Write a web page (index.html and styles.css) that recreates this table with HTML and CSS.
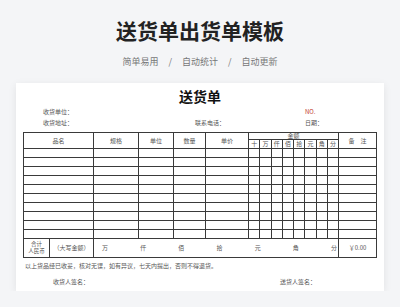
FILE: index.html
```html
<!DOCTYPE html>
<html lang="zh-CN">
<head>
<meta charset="utf-8">
<title>送货单出货单模板</title>
<link rel="stylesheet" href="styles.css">
</head>
<body>
<header class="hero">
  <h1 class="hero-title">送货单出货单模板</h1>
  <p class="hero-sub"><span>简单易用</span><span class="sep">/</span><span>自动统计</span><span class="sep">/</span><span>自动更新</span></p>
</header>
<main class="sheet">
  <h2 class="sheet-title">送货单</h2>
  <div class="info">
    <span>收货单位：</span><span></span><span class="no">NO.</span>
    <span>收货地址：</span><span>联系电话：</span><span>日期：</span>
  </div>
  <table class="grid">
    <colgroup>
      <col class="c-a"><col class="c-b"><col class="c-spec"><col class="c-unit"><col class="c-qty"><col class="c-price">
      <col class="c-amt"><col class="c-amt"><col class="c-amt"><col class="c-amt"><col class="c-amt"><col class="c-amt"><col class="c-amt"><col class="c-amt">
      <col class="c-note">
    </colgroup>
    <thead>
      <tr class="head-top">
        <th colspan="2" rowspan="2">品名</th>
        <th rowspan="2">规格</th>
        <th rowspan="2">单位</th>
        <th rowspan="2">数量</th>
        <th rowspan="2">单价</th>
        <th colspan="8">金额</th>
        <th rowspan="2">备　注</th>
      </tr>
      <tr class="head-sub">
        <th>十</th><th>万</th><th>仟</th><th>佰</th><th>拾</th><th>元</th><th>角</th><th>分</th>
      </tr>
    </thead>
    <tbody>
      <tr class="row"><td colspan="2"></td><td></td><td></td><td></td><td></td><td></td><td></td><td></td><td></td><td></td><td></td><td></td><td></td><td></td></tr>
      <tr class="row"><td colspan="2"></td><td></td><td></td><td></td><td></td><td></td><td></td><td></td><td></td><td></td><td></td><td></td><td></td><td></td></tr>
      <tr class="row"><td colspan="2"></td><td></td><td></td><td></td><td></td><td></td><td></td><td></td><td></td><td></td><td></td><td></td><td></td><td></td></tr>
      <tr class="row"><td colspan="2"></td><td></td><td></td><td></td><td></td><td></td><td></td><td></td><td></td><td></td><td></td><td></td><td></td><td></td></tr>
      <tr class="row"><td colspan="2"></td><td></td><td></td><td></td><td></td><td></td><td></td><td></td><td></td><td></td><td></td><td></td><td></td><td></td></tr>
      <tr class="row"><td colspan="2"></td><td></td><td></td><td></td><td></td><td></td><td></td><td></td><td></td><td></td><td></td><td></td><td></td><td></td></tr>
      <tr class="row"><td colspan="2"></td><td></td><td></td><td></td><td></td><td></td><td></td><td></td><td></td><td></td><td></td><td></td><td></td><td></td></tr>
      <tr class="row"><td colspan="2"></td><td></td><td></td><td></td><td></td><td></td><td></td><td></td><td></td><td></td><td></td><td></td><td></td><td></td></tr>
      <tr class="row"><td colspan="2"></td><td></td><td></td><td></td><td></td><td></td><td></td><td></td><td></td><td></td><td></td><td></td><td></td><td></td></tr>
      <tr class="row"><td colspan="2"></td><td></td><td></td><td></td><td></td><td></td><td></td><td></td><td></td><td></td><td></td><td></td><td></td><td></td></tr>
    </tbody>
    <tfoot>
      <tr class="total">
        <td class="sum-label">合计<br>人民币</td>
        <td>（大写金额）</td>
        <td colspan="12"><div class="units"><span>万</span><span>仟</span><span>佰</span><span>拾</span><span>元</span><span>角</span><span>分</span></div></td>
        <td>￥0.00</td>
      </tr>
    </tfoot>
  </table>
  <p class="terms">以上货品经已收妥，核对无误，如有异议，七天内提出，否则不得退货。</p>
  <div class="sign"><span>收货人签名：</span><span>送货人签名：</span></div>
</main>
</body>
</html>
```

FILE: styles.css
```css
* { box-sizing: border-box; }
body {
  margin: 0;
  background: #f4f5f7;
  font-family: "Noto Sans CJK SC", "Noto Sans", sans-serif;
  color: #333;
}
.hero { padding-top: 18px; text-align: center; }
.hero-title {
  margin: 0;
  font-size: 21px;
  line-height: 24px;
  font-weight: 700;
  color: #222;
}
.hero-sub {
  margin: 14px 0 0;
  display: flex;
  justify-content: center;
  gap: 10px;
  font-size: 9px;
  line-height: 12px;
  color: #777;
}
.sheet {
  margin: 15px 16px 0;
  height: 208px;
  background: #fff;
  box-shadow: 0 2px 8px rgba(0, 0, 0, 0.08);
  padding: 5px 7px 0;
}
.sheet-title {
  margin: 0;
  text-align: center;
  font-size: 14px;
  line-height: 16px;
  font-weight: 700;
  color: #111;
}
.info {
  display: grid;
  grid-template-columns: 152px 110px auto;
  row-gap: 3px;
  margin: 4px 0 0 20px;
  font-size: 6px;
  line-height: 8px;
  color: #555;
}
.no { color: #c0392b; }
.grid {
  margin-top: 5px;
  width: 353px;
  table-layout: fixed;
  border-collapse: collapse;
  font-size: 6px;
  line-height: 6px;
  color: #555;
}
.c-a { width: 26px; }
.c-b { width: 44px; }
.c-spec { width: 45px; }
.c-unit { width: 35px; }
.c-qty { width: 32px; }
.c-price { width: 43px; }
.c-amt { width: 11.25px; }
.c-note { width: 38px; }
.grid th, .grid td {
  border: 1px solid #3a3a3a;
  padding: 0;
  font-weight: 400;
  text-align: center;
  vertical-align: middle;
}
.head-top { height: 6px; }
.head-sub { height: 9px; }
.row { height: 9px; }
.total { height: 19px; }
.grid .sum-label { font-size: 5.5px; line-height: 7.5px; }
.units {
  display: flex;
  justify-content: space-between;
  padding: 0 1px 0 8px;
}
.terms {
  margin: 4px 0 0 2px;
  font-size: 6px;
  line-height: 8px;
  color: #555;
}
.sign {
  display: grid;
  grid-template-columns: 227px auto;
  margin: 8px 0 0 30px;
  font-size: 6px;
  line-height: 8px;
  color: #555;
}
```
